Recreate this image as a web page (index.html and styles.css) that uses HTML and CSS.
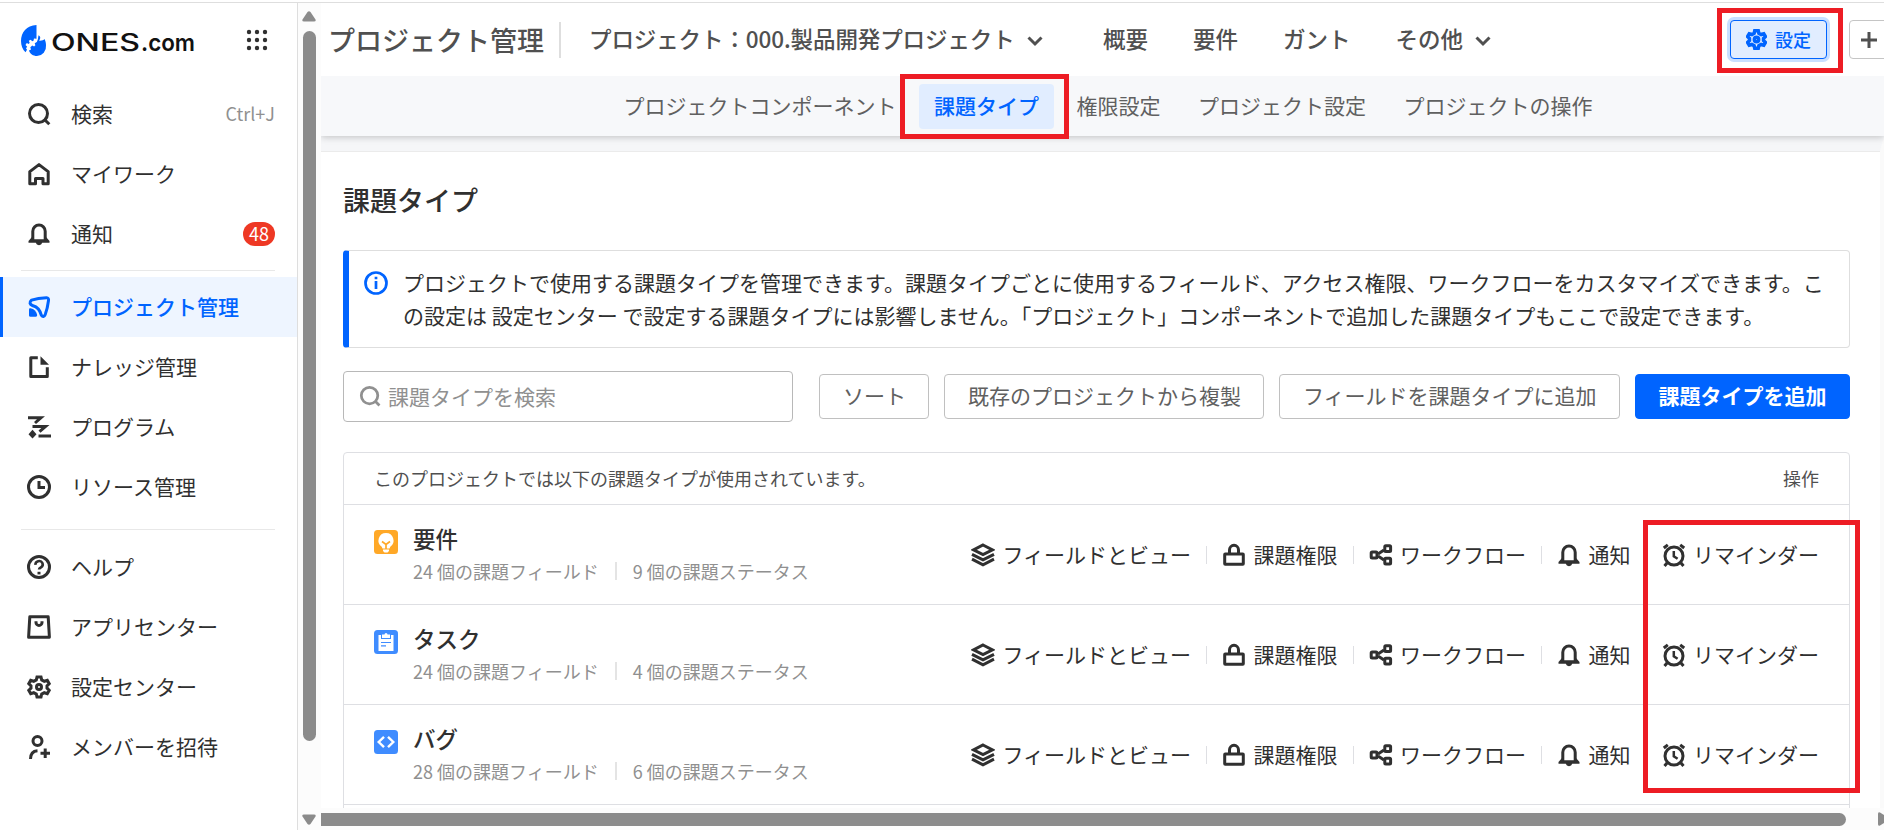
FILE: index.html
```html
<!DOCTYPE html>
<html lang="ja">
<head>
  <meta charset="UTF-8">
  <meta name="viewport" content="width=device-width, initial-scale=1.0">
  <title>課題タイプ - ONES.com</title>
  <link rel="stylesheet" href="styles.css">
</head>
<body>
  <!-- Shared icons -->
  <svg class="sprite" aria-hidden="true">
    <symbol id="i-search" viewBox="0 0 24 24"><circle cx="11.500" cy="11.500" r="9"/><path d="M17.500 17.500l4.800 4.800"/></symbol>
    <symbol id="i-home" viewBox="0 0 24 24"><path stroke-linejoin="round" d="M2.800 9.600L12 2.600l9.200 7V21.800H16v-5.300H8.500v5.300H2.800z"/></symbol>
    <symbol id="i-bell" viewBox="0 0 24 24"><path d="M5.800 18V9.200a6.200 6.200 0 0 1 12.400 0V18"/><path class="solid" d="M5 15L1.500 19v1.800h7.300a3.300 3.300 0 0 0 6.400 0h7.300V19L19 15l-1 2.300H6z"/></symbol>
    <symbol id="i-project" viewBox="0 0 24 24"><path stroke-linejoin="round" d="M4.500 5.200Q11 3 19.500 2.700q2.500.2 2 2.800-1 8-3.200 13.800-1.800 4-4 .8C12.800 14.500 10.500 12 6 10.800Q.800 8.500 4.500 5.200z"/><path class="solid" d="M2 14.500q0-1.500 1.500-1.200Q9 14.500 10.200 20q.2 1.800-1.500 1.800H3.500Q2 21.800 2 20.500z"/></symbol>
    <symbol id="i-doc" viewBox="0 0 24 24"><path stroke-linejoin="round" d="M10.800 2.800H3.800V21.500H20.300V12.200"/><path class="solid" d="M13.500 1.300L22 9.800H13.500z"/></symbol>
    <symbol id="i-program" viewBox="0 0 24 24"><path d="M1 2.700H14L8 8"/><path d="M5.500 11.500H18.500L12.500 16.700"/><path d="M11.500 21H24"/><path class="solid" d="M5.500 14.800l4 4.400-4 4.400-4-4.400z"/></symbol>
    <symbol id="i-clock" viewBox="0 0 24 24"><circle cx="12" cy="12" r="10.500"/><path d="M12 6v6.500h6"/></symbol>
    <symbol id="i-help" viewBox="0 0 24 24"><circle cx="12" cy="12" r="10.500"/><path stroke-width="2.600" d="M8.500 9.800a3.600 3.400 0 1 1 5.500 2.500c-1.300.8-2 1.200-2 2.300"/><path d="M12 16.800v2.600"/></symbol>
    <symbol id="i-app" viewBox="0 0 24 24"><path stroke-linejoin="round" d="M2.800 1.800H21.200L22.400 22.200H1.600z"/><path d="M9 6.200v1.200a3 3 0 0 0 6 0V6.200"/></symbol>
    <symbol id="i-gear" viewBox="0 0 24 24"><path d="M10 1.900h4l.7 3 2.600 1.400 3-.9 1.900 3.300-2.200 2.100v2.400l2.200 2.100-1.900 3.300-3-.9-2.600 1.400-.7 3h-4l-.7-3-2.600-1.400-3 .9-1.900-3.300L4 13.200v-2.400L1.800 8.700l1.900-3.300 3 .9 2.600-1.400z"/><circle cx="12" cy="12" r="2.500"/></symbol>
    <symbol id="i-invite" viewBox="0 0 24 24"><circle cx="10.500" cy="6" r="4.500"/><path d="M3.500 24c0-5.500 2.800-8 7-8.300"/><path d="M18.200 13.500v9.500M13.500 18.200H23"/></symbol>
    <symbol id="i-layers" viewBox="0 0 24 24"><path d="M12 2L21.500 6.800 12 11.600 2.500 6.800z"/><path d="M1 11.300l11 5.600 11-5.600M1 16.200l11 5.600 11-5.600"/></symbol>
    <symbol id="i-lock" viewBox="0 0 24 24"><rect x="2.700" y="10.900" width="18.600" height="10.400" rx=".5"/><path d="M7.500 10.500V7a4.500 4.700 0 0 1 9 0v3.500"/></symbol>
    <symbol id="i-flow" viewBox="0 0 24 24"><rect x="2.200" y="9" width="5.800" height="6" rx="1"/><rect x="15.800" y="2.700" width="5.800" height="5.800" rx="1"/><rect x="15.800" y="15.300" width="5.800" height="5.800" rx="1"/><path d="M9 11l6-4M9 13l6 4"/></symbol>
    <symbol id="i-alarm" viewBox="0 0 24 24"><circle cx="12" cy="13" r="9"/><path stroke-width="2.500" d="M11.800 8v5.300l3.800 2.400"/><path d="M1.800 5l4-3.200M22.200 5l-4-3.200M5 20l-2.500 3M19 20l2.500 3"/></symbol>
    <symbol id="i-chevron" viewBox="0 0 16 12"><path d="M1.500 2.500L8 9l6.500-6.500"/></symbol>
  </svg>

  <div class="app">
    <aside class="sidebar">
      <div class="brand">
        <svg class="logo" width="176" height="34" viewBox="0 0 176 34">
          <path fill="#0064ff" d="M15.500 1C5.500 1.500 0 8.500 0 17c0 4.500 1.500 8.500 4.500 11.300l1.500-2.500-1-1.500 1.200-1.500-1.700-1.800 1.300-2 2 .9.900-1.200-.9-1.900 2-1.100 1.300 1.600 1.400-.5.500-2.200 2.500.1z"/>
          <path fill="#0064ff" d="M17.500 11.300c2.200 1.200 2.300 3.300.6 5.400 2.400.3 4.600-.7 5.400-1.700 1 1.800 1.500 4 1.500 6.500A9.500 9.500 0 0 1 16 32c-4 0-7-2.200-8-5.500l2-1-.7-2.300 2-1.600 1.800 1 1.300-1.300-.7-2 2.100-1.300 1-2.500z"/>
          <text class="logo-main" x="30" y="27" textLength="89" lengthAdjust="spacingAndGlyphs">ONES</text>
          <text class="logo-sub" x="120" y="27" textLength="54" lengthAdjust="spacingAndGlyphs">.com</text>
        </svg>
        <svg class="apps" width="22" height="22" viewBox="0 0 22 22">
          <circle cx="3" cy="3" r="2.200"/><circle cx="11" cy="3" r="2.200"/><circle cx="19" cy="3" r="2.200"/>
          <circle cx="3" cy="11" r="2.200"/><circle cx="11" cy="11" r="2.200"/><circle cx="19" cy="11" r="2.200"/>
          <circle cx="3" cy="19" r="2.200"/><circle cx="11" cy="19" r="2.200"/><circle cx="19" cy="19" r="2.200"/>
        </svg>
      </div>
      <nav class="menu">
        <a class="menu-item"><svg class="icon"><use href="#i-search"/></svg>検索<span class="shortcut">Ctrl+J</span></a>
        <a class="menu-item"><svg class="icon"><use href="#i-home"/></svg>マイワーク</a>
        <a class="menu-item"><svg class="icon"><use href="#i-bell"/></svg>通知<span class="badge">48</span></a>
      </nav>
      <nav class="menu menu-products">
        <a class="menu-item active"><svg class="icon"><use href="#i-project"/></svg>プロジェクト管理</a>
        <a class="menu-item"><svg class="icon"><use href="#i-doc"/></svg>ナレッジ管理</a>
        <a class="menu-item"><svg class="icon"><use href="#i-program"/></svg>プログラム</a>
        <a class="menu-item"><svg class="icon"><use href="#i-clock"/></svg>リソース管理</a>
      </nav>
      <nav class="menu menu-system">
        <a class="menu-item"><svg class="icon"><use href="#i-help"/></svg>ヘルプ</a>
        <a class="menu-item"><svg class="icon"><use href="#i-app"/></svg>アプリセンター</a>
        <a class="menu-item"><svg class="icon"><use href="#i-gear"/></svg>設定センター</a>
        <a class="menu-item"><svg class="icon"><use href="#i-invite"/></svg>メンバーを招待</a>
      </nav>
    </aside>

    <div class="scroll-y">
      <svg width="14" height="11" viewBox="0 0 14 11"><path d="M5.500 1q1.500-1.500 3 0l5 7.500q.8 2-1.500 2H2q-2.300 0-1.500-2z"/></svg>
      <div class="thumb-y"></div>
      <svg class="arrow-down" width="14" height="11" viewBox="0 0 14 11"><path d="M5.500 10q1.500 1.500 3 0l5-7.500q.8-2-1.500-2H2q-2.300 0-1.500 2z"/></svg>
    </div>

    <main class="main">
      <header class="header">
        <div class="product">プロジェクト管理</div>
        <div class="project">プロジェクト：000.製品開発プロジェクト<svg class="chevron"><use href="#i-chevron"/></svg></div>
        <nav class="tabs">
          <a>概要</a>
          <a>要件</a>
          <a>ガント</a>
          <a>その他<svg class="chevron"><use href="#i-chevron"/></svg></a>
        </nav>
        <button class="btn-setting"><svg class="icon"><use href="#i-gear"/></svg>設定</button>
        <button class="btn-plus"><svg width="18" height="18" viewBox="0 0 18 18"><path d="M9 1v16M1 9h16"/></svg></button>
      </header>
      <nav class="subnav">
        <a>プロジェクトコンポーネント</a>
        <a class="active">課題タイプ</a>
        <a>権限設定</a>
        <a>プロジェクト設定</a>
        <a>プロジェクトの操作</a>
      </nav>

      <section class="content">
        <h1>課題タイプ</h1>
        <div class="alert">
          <svg width="24" height="24" viewBox="0 0 24 24"><circle cx="12" cy="12" r="10.500"/><path d="M12 10v8M12 5.800v2.400"/></svg>
          <p>プロジェクトで使用する課題タイプを管理できます。課題タイプごとに使用するフィールド、アクセス権限、ワークフローをカスタマイズできます。この設定は 設定センター で設定する課題タイプには影響しません。「プロジェクト」コンポーネントで追加した課題タイプもここで設定できます。</p>
        </div>

        <div class="toolbar">
          <div class="search"><svg class="icon"><use href="#i-search"/></svg>課題タイプを検索</div>
          <button class="btn">ソート</button>
          <button class="btn">既存のプロジェクトから複製</button>
          <button class="btn">フィールドを課題タイプに追加</button>
          <button class="btn btn-primary">課題タイプを追加</button>
        </div>

        <div class="table">
          <div class="table-head"><span>このプロジェクトでは以下の課題タイプが使用されています。</span><span>操作</span></div>

          <div class="row">
            <svg class="type-icon" viewBox="0 0 24 24"><rect width="24" height="24" rx="3.500" fill="#ffa827"/><path fill="#fff" d="M12 3a7.600 7.600 0 0 1 4.300 13.800L15.500 18.500h-7L7.700 16.800A7.600 7.600 0 0 1 12 3zM9 19.500h6v1.500l-1.500 1.500h-3L9 21z"/><path fill="none" stroke="#ffa827" stroke-width="1.700" d="M8 11.500l4 3 4-3M12 14v5"/></svg>
            <div class="type">
              <div class="type-name">要件</div>
              <div class="type-meta"><span>24 個の課題フィールド</span><span>9 個の課題ステータス</span></div>
            </div>
            <div class="actions">
              <a><svg class="icon"><use href="#i-layers"/></svg>フィールドとビュー</a>
              <a><svg class="icon"><use href="#i-lock"/></svg>課題権限</a>
              <a><svg class="icon"><use href="#i-flow"/></svg>ワークフロー</a>
              <a><svg class="icon"><use href="#i-bell"/></svg>通知</a>
              <a><svg class="icon"><use href="#i-alarm"/></svg>リマインダー</a>
            </div>
          </div>

          <div class="row">
            <svg class="type-icon" viewBox="0 0 24 24"><rect width="24" height="24" rx="3.500" fill="#3f8cff"/><path fill="#fff" d="M4.500 5H7v4h10V5h2.500v16h-15z"/><path fill="#fff" d="M8 4.500h2.500a1.500 1.500 0 0 1 3 0H16V8H8z"/><path fill="none" stroke="#3f8cff" stroke-width="1.200" d="M7 12.500h10M7 15.800h5"/></svg>
            <div class="type">
              <div class="type-name">タスク</div>
              <div class="type-meta"><span>24 個の課題フィールド</span><span>4 個の課題ステータス</span></div>
            </div>
            <div class="actions">
              <a><svg class="icon"><use href="#i-layers"/></svg>フィールドとビュー</a>
              <a><svg class="icon"><use href="#i-lock"/></svg>課題権限</a>
              <a><svg class="icon"><use href="#i-flow"/></svg>ワークフロー</a>
              <a><svg class="icon"><use href="#i-bell"/></svg>通知</a>
              <a><svg class="icon"><use href="#i-alarm"/></svg>リマインダー</a>
            </div>
          </div>

          <div class="row">
            <svg class="type-icon" viewBox="0 0 24 24"><rect width="24" height="24" rx="3.500" fill="#3f8cff"/><path fill="none" stroke="#fff" stroke-width="2.400" d="M10 6.800L4.700 12l5.300 5.200M14 6.800l5.300 5.200-5.300 5.200"/></svg>
            <div class="type">
              <div class="type-name">バグ</div>
              <div class="type-meta"><span>28 個の課題フィールド</span><span>6 個の課題ステータス</span></div>
            </div>
            <div class="actions">
              <a><svg class="icon"><use href="#i-layers"/></svg>フィールドとビュー</a>
              <a><svg class="icon"><use href="#i-lock"/></svg>課題権限</a>
              <a><svg class="icon"><use href="#i-flow"/></svg>ワークフロー</a>
              <a><svg class="icon"><use href="#i-bell"/></svg>通知</a>
              <a><svg class="icon"><use href="#i-alarm"/></svg>リマインダー</a>
            </div>
          </div>
        </div>
      </section>

      <div class="scroll-x">
        <div class="thumb-x"></div>
        <svg width="6" height="14" viewBox="0 0 6 14"><path d="M0 2q0-2.500 2-1.500l8 5q1.500 1.500 0 3l-8 5q-2 1-2-1.500z"/></svg>
      </div>
    </main>
  </div>

  <!-- Guide highlights -->
  <div class="mark mark-setting"></div>
  <div class="mark mark-tab"></div>
  <div class="mark mark-reminder"></div>
</body>
</html>
```
FILE: styles.css
```css
* {
  margin: 0;
  padding: 0;
  box-sizing: border-box;
}
body {
  height: 830px;
  overflow: hidden;
  position: relative;
  padding-top: 2px;
  background: #fff;
  color: #303030;
  font-family: "Noto Sans CJK JP", "Noto Sans", sans-serif;
  font-size: 21px;
}
button {
  font: inherit;
  color: inherit;
  background: #fff;
}
.sprite {
  display: none;
}
.icon {
  width: 24px;
  height: 24px;
  flex: none;
  fill: none;
  stroke: currentColor;
  stroke-width: 3;
}
.solid {
  fill: currentColor;
  stroke: none;
}
.app {
  display: flex;
  height: 828px;
  border-top: 1px solid #dedede;
}

/* Sidebar */
.sidebar {
  width: 298px;
  flex: none;
  border-right: 1px solid #dedede;
}
.brand {
  display: flex;
  justify-content: space-between;
  align-items: flex-start;
  height: 81px;
  padding: 21px 29px 0 21px;
}
.logo-main,
.logo-sub {
  font-family: Inter, sans-serif;
  font-weight: 500;
  font-size: 24px;
  fill: #111;
}
.logo-sub {
  font-weight: 600;
}
.apps {
  margin-top: 5px;
  fill: #303030;
}
.menu-item {
  display: flex;
  align-items: center;
  gap: 20px;
  height: 60px;
  padding: 0 22px 2px 27px;
}
.menu-item .icon,
.menu-item .badge {
  margin-top: 2px;
}
.menu-item.active {
  padding-left: 24px;
  border-left: 3px solid #0064ff;
  background: #eef5ff;
  color: #0064ff;
  font-weight: 500;
}
.menu-products::before,
.menu-system::before {
  content: "";
  display: block;
  height: 1px;
  margin: 6px 22px 6px 21px;
  background: #e8e8e8;
}
.menu-system::before {
  margin: 12px 22px 7px 21px;
}
.shortcut {
  margin-left: auto;
  color: #909090;
  font-size: 18px;
}
.badge {
  margin-left: auto;
  width: 32px;
  height: 24px;
  border-radius: 12px;
  background: #ee3824;
  color: #fff;
  font-size: 18px;
  line-height: 23px;
  text-align: center;
}

/* Scrollbars */
.scroll-y {
  display: flex;
  flex-direction: column;
  align-items: center;
  width: 23px;
  flex: none;
  padding: 8px 1px 5px 0;
  background: #fcfcfc;
  fill: #8b8b8b;
}
.thumb-y {
  width: 13px;
  height: 710px;
  margin-top: 9px;
  border-radius: 7px;
  background: #8b8b8b;
}
.arrow-down {
  margin-top: auto;
}
.scroll-x {
  display: flex;
  align-items: center;
  height: 22px;
  background: #fcfcfc;
  fill: #8b8b8b;
}
.scroll-x svg {
  margin-left: auto;
}
.thumb-x {
  width: 1525px;
  height: 13px;
  border-radius: 0 7px 7px 0;
  background: #8b8b8b;
}

/* Header */
.main {
  flex: 1;
  min-width: 0;
  display: flex;
  flex-direction: column;
}
.header {
  display: flex;
  align-items: center;
  height: 73px;
  flex: none;
  padding-left: 7px;
  overflow: hidden;
  white-space: nowrap;
  color: #505050;
  font-size: 22.5px;
  font-weight: 500;
}
.header > * {
  flex: none;
}
.product {
  height: 36px;
  width: 233px;
  border-right: 2px solid #dedede;
  font-size: 27px;
  line-height: 35px;
}
.project {
  width: 542px;
  padding: 0 0 3px 28px;
  letter-spacing: -.1px;
}
.chevron {
  width: 16px;
  height: 12px;
  margin: 0 0 1px 12px;
  fill: none;
  stroke: currentColor;
  stroke-width: 3;
}
.tabs {
  display: flex;
  gap: 45px;
  padding-bottom: 3px;
}
.btn-setting {
  display: flex;
  align-items: center;
  justify-content: center;
  gap: 8px;
  width: 97px;
  height: 39px;
  margin-left: auto;
  padding-bottom: 1px;
  border: 1px solid #0064ff;
  border-radius: 4px;
  background: #e1edff;
  box-shadow: 0 0 0 3px #c9dfff;
  color: #0064ff;
  font-size: 18px;
}
.btn-setting .icon {
  width: 21px;
  height: 21px;
  stroke-width: 4;
}
.btn-plus {
  width: 42px;
  height: 39px;
  margin: 0 -7px 0 22px;
  border: 1px solid #c5c5c5;
  border-radius: 4px;
}
.btn-plus svg {
  display: block;
  margin-left: 10px;
  stroke: #505050;
  stroke-width: 3;
}
.subnav {
  display: flex;
  align-items: center;
  justify-content: center;
  gap: 7.5px;
  height: 60px;
  flex: none;
  position: relative;
  z-index: 1;
  padding-left: 11px;
  background: #f7f8fa;
  box-shadow: 0 1px 7px rgba(0, 0, 0, .22);
  clip-path: inset(0 0 -14px 0);
  color: #606060;
}
.subnav a {
  height: 45px;
  padding: 0 15px;
  border-radius: 4px;
  line-height: 43px;
}
.subnav .active {
  background: #e1edff;
  color: #0064ff;
  font-weight: 500;
}

/* Content */
.content {
  flex: 1;
  min-height: 0;
  overflow: hidden;
  padding: 30px 30px 0 22px;
  border-right: 4px solid #fafafa;
  border-top: 15px solid #f5f6f8;
  box-shadow: inset 0 1px 0 #ebebeb;
}
h1 {
  height: 40px;
  font-size: 27px;
  line-height: 38px;
  font-weight: 500;
}
.alert {
  display: flex;
  gap: 15px;
  height: 98px;
  margin-top: 29px;
  padding: 15px 23px 0 15px;
  border: 1px solid #dedede;
  border-left: 6px solid #0064ff;
  border-radius: 4px;
  line-height: 33px;
}
.alert svg {
  flex: none;
  margin-top: 5px;
  fill: none;
  stroke: #0064ff;
  stroke-width: 2.7;
}
.toolbar {
  display: flex;
  align-items: center;
  gap: 15px;
  margin-top: 23px;
}
.search {
  display: flex;
  align-items: center;
  gap: 7px;
  width: 450px;
  height: 51px;
  margin-right: auto;
  padding: 0 0 2px 15px;
  border: 1px solid #b8b8b8;
  border-radius: 4px;
  color: #909090;
}
.search .icon {
  width: 22px;
  height: 22px;
}
.btn {
  height: 45px;
  padding: 0 22.5px 2px;
  border: 1px solid #c0c0c0;
  border-radius: 4px;
  color: #606060;
  line-height: 41px;
  white-space: nowrap;
}
.btn-primary {
  border-color: #0064ff;
  background: #0064ff;
  color: #fff;
  font-weight: 700;
}
.table {
  height: 400px;
  margin-top: 30px;
  border: 1px solid #dedfe3;
  border-radius: 4px 4px 0 0;
}
.table-head {
  display: flex;
  justify-content: space-between;
  height: 52px;
  padding: 0 30px;
  border-bottom: 1px solid #dedfe3;
  color: #505050;
  font-size: 18px;
  line-height: 50px;
}
.row {
  display: flex;
  height: 100px;
  padding: 0 30px;
  border-bottom: 1px solid #dedfe3;
}
.type-icon {
  width: 24px;
  height: 24px;
  margin-top: 25px;
}
.type {
  margin-left: 15px;
}
.type-name {
  margin-top: 16px;
  font-size: 22.5px;
  line-height: 34px;
  font-weight: 500;
}
.type-meta {
  display: flex;
  margin-top: 7px;
  color: #909090;
  font-size: 18px;
  line-height: 18px;
}
.type-meta span + span {
  margin-left: 16px;
  padding-left: 16px;
  border-left: 2px solid #e4e4e4;
}
.actions {
  display: flex;
  align-items: center;
  height: 100px;
  margin-left: auto;
}
.actions a {
  display: flex;
  align-items: center;
  gap: 7.5px;
  height: 18px;
  padding-bottom: 2px;
  white-space: nowrap;
}
.actions .icon {
  margin-top: 2px;
}
.actions a + a {
  margin-left: 15px;
  padding-left: 15px;
  border-left: 1px solid #dedfe3;
}

/* Red frames drawn over the page */
.mark {
  position: absolute;
  border: 5px solid #ed1c24;
  z-index: 2;
}
.mark-setting {
  left: 1717px;
  top: 8px;
  width: 126px;
  height: 65px;
}
.mark-tab {
  left: 900px;
  top: 74px;
  width: 169px;
  height: 65px;
}
.mark-reminder {
  left: 1643px;
  top: 520px;
  width: 217px;
  height: 273px;
}
```
